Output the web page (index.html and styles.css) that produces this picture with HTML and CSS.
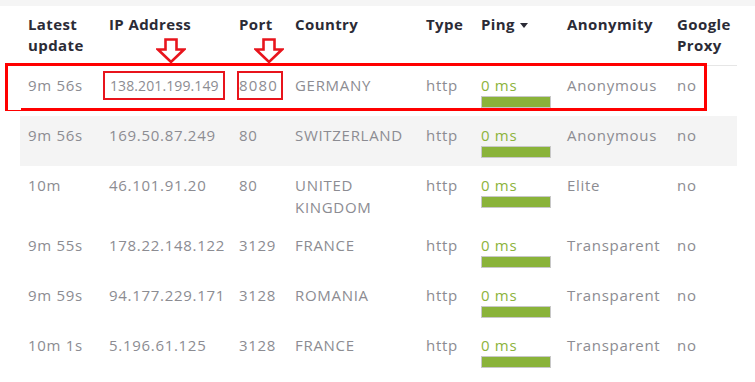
FILE: index.html
```
<!DOCTYPE html>
<html lang="en">
<head>
  <meta charset="UTF-8" />
  <title>Proxy List</title>
  <link rel="stylesheet" href="styles.css">
</head>
<body>
  <div class="top-strip"></div>
  <div class="wrap">
    <table class="proxy-table">
      <colgroup>
        <col style="width:81px">
        <col style="width:130px">
        <col style="width:56px">
        <col style="width:131px">
        <col style="width:55px">
        <col style="width:86px">
        <col style="width:110px">
        <col style="width:68px">
      </colgroup>
      <thead>
        <tr>
          <th>Latest update</th>
          <th>IP Address</th>
          <th>Port</th>
          <th>Country</th>
          <th>Type</th>
          <th>Ping <span class="caret"></span></th>
          <th>Anonymity</th>
          <th>Google Proxy</th>
        </tr>
      </thead>
      <tbody>
        <tr>
          <td>9m 56s</td>
          <td><span class="mark mark-ip">138.201.199.149</span></td>
          <td><span class="mark mark-port">8080</span></td>
          <td>GERMANY</td>
          <td>http</td>
          <td class="ping">0 ms<div class="bar"></div></td>
          <td>Anonymous</td>
          <td>no</td>
        </tr>
        <tr class="striped">
          <td>9m 56s</td>
          <td>169.50.87.249</td>
          <td>80</td>
          <td>SWITZERLAND</td>
          <td>http</td>
          <td class="ping">0 ms<div class="bar"></div></td>
          <td>Anonymous</td>
          <td>no</td>
        </tr>
        <tr>
          <td>10m</td>
          <td>46.101.91.20</td>
          <td>80</td>
          <td>UNITED KINGDOM</td>
          <td>http</td>
          <td class="ping">0 ms<div class="bar"></div></td>
          <td>Elite</td>
          <td>no</td>
        </tr>
        <tr>
          <td>9m 55s</td>
          <td>178.22.148.122</td>
          <td>3129</td>
          <td>FRANCE</td>
          <td>http</td>
          <td class="ping">0 ms<div class="bar"></div></td>
          <td>Transparent</td>
          <td>no</td>
        </tr>
        <tr>
          <td>9m 59s</td>
          <td>94.177.229.171</td>
          <td>3128</td>
          <td>ROMANIA</td>
          <td>http</td>
          <td class="ping">0 ms<div class="bar"></div></td>
          <td>Transparent</td>
          <td>no</td>
        </tr>
        <tr>
          <td>10m 1s</td>
          <td>5.196.61.125</td>
          <td>3128</td>
          <td>FRANCE</td>
          <td>http</td>
          <td class="ping">0 ms<div class="bar"></div></td>
          <td>Transparent</td>
          <td>no</td>
        </tr>
      </tbody>
    </table>

    <!-- annotations drawn over the screenshot -->
    <div class="row-box"></div>
    <div class="row-box-gap"></div>
    <svg class="arrow arrow-ip" width="30" height="26" viewBox="0 0 30 26">
      <path d="M9.5 1.5 H20.5 V11.5 H28 L15 24 L2 11.5 H9.5 Z" fill="none" stroke="#e8141c" stroke-width="2.6" stroke-linejoin="miter"/>
    </svg>
    <svg class="arrow arrow-port" width="30" height="26" viewBox="0 0 30 26">
      <path d="M9.5 1.5 H20.5 V11.5 H28 L15 24 L2 11.5 H9.5 Z" fill="none" stroke="#e8141c" stroke-width="2.6" stroke-linejoin="miter"/>
    </svg>
  </div>
</body>
</html>
```

FILE: styles.css
```
body {
  margin: 0;
  background: #fff;
  font-family: 'Open Sans', 'Liberation Sans', sans-serif;
}
.top-strip {
  height: 6px;
  background: #f5f5f5;
}
.wrap {
  position: relative;
  padding-left: 20px;
}
.proxy-table {
  width: 717px;
  border-collapse: collapse;
  table-layout: fixed;
}
.proxy-table th {
  text-align: left;
  vertical-align: top;
  font-size: 15px;
  font-weight: 700;
  line-height: 21px;
  letter-spacing: 0.4px;
  color: #2b2b36;
  padding: 8px 8px 9px;
  border-bottom: 1px solid #e6e6e6;
}
.caret {
  display: inline-block;
  width: 0;
  height: 0;
  border-left: 4px solid transparent;
  border-right: 4px solid transparent;
  border-top: 5px solid #2b2b36;
  vertical-align: middle;
  margin-left: 1px;
}
.proxy-table td {
  vertical-align: top;
  font-size: 15px;
  line-height: 22px;
  letter-spacing: 0.7px;
  color: #8c8c92;
  padding: 8px 8px 8px;
  height: 34px;
}
.proxy-table tr.striped td {
  background: #f4f4f4;
}
.ping {
  color: #8cb33b !important;
}
.bar {
  width: 68px;
  height: 10px;
  background: #8ab33a;
  border: 1px solid #c8c8c8;
}
.mark {
  display: inline-block;
  border: 2px solid #e8141c;
  line-height: 25px;
  white-space: nowrap;
  vertical-align: top;
  margin-top: -3px;
}
.mark-ip {
  width: 113px;
  margin-left: -6px;
  padding-left: 5px;
  font-size: 14px;
  letter-spacing: 0.1px;
}
.mark-port {
  margin-left: -2px;
  padding-right: 3px;
  letter-spacing: 1.2px;
}
.row-box {
  position: absolute;
  left: 5px;
  top: 57px;
  width: 696px;
  height: 42px;
  border: 3px solid #f00;
}
.row-box-gap {
  position: absolute;
  left: 8px;
  top: 101px;
  width: 13px;
  height: 3px;
  background: #fff;
}
.arrow {
  position: absolute;
  top: 32px;
}
.arrow-ip {
  left: 156px;
}
.arrow-port {
  left: 254px;
}
```
